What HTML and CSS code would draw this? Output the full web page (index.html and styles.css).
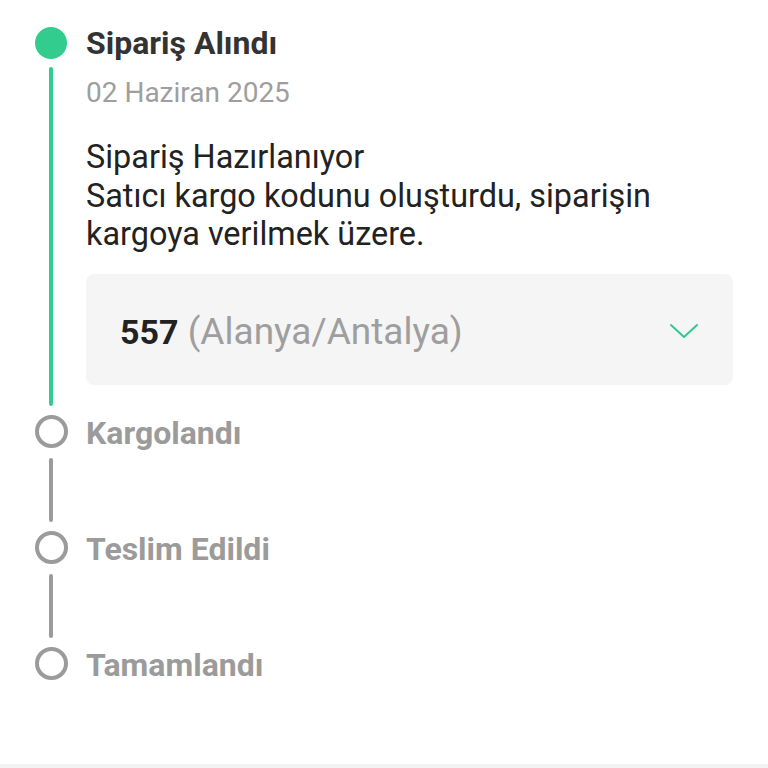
FILE: index.html
```html
<!DOCTYPE html>
<html lang="tr">
<head>
  <meta charset="UTF-8">
  <meta name="viewport" content="width=device-width, initial-scale=1.0">
  <title>Sipariş Takibi</title>
  <link rel="stylesheet" href="styles.css">
</head>
<body>

  <div class="timeline">

    <div class="step done">
      <div class="rail">
        <span class="dot"></span>
        <span class="line"></span>
      </div>
      <div class="step-body">
        <h2 class="step-title">Sipariş Alındı</h2>
        <div class="step-date">02 Haziran 2025</div>
        <p class="step-desc">Sipariş Hazırlanıyor<br>Satıcı kargo kodunu oluşturdu, siparişin kargoya verilmek üzere.</p>
        <div class="cargo-box">
          <span class="cargo-text"><b>557</b> (Alanya/Antalya)</span>
          <svg class="chevron" width="30" height="18" viewBox="0 0 30 18">
            <polyline points="2,3 15,15 28,3" fill="none" stroke="#32c98d" stroke-width="2" stroke-linecap="round" stroke-linejoin="round"/>
          </svg>
        </div>
      </div>
    </div>

    <div class="step">
      <div class="rail">
        <span class="dot"></span>
        <span class="line"></span>
      </div>
      <div class="step-body">
        <h2 class="step-title">Kargolandı</h2>
      </div>
    </div>

    <div class="step">
      <div class="rail">
        <span class="dot"></span>
        <span class="line"></span>
      </div>
      <div class="step-body">
        <h2 class="step-title">Teslim Edildi</h2>
      </div>
    </div>

    <div class="step last">
      <div class="rail">
        <span class="dot"></span>
      </div>
      <div class="step-body">
        <h2 class="step-title">Tamamlandı</h2>
      </div>
    </div>

  </div>

  <div class="bottom-bar"></div>

</body>
</html>
```

FILE: styles.css
```css
* {
  margin: 0;
  padding: 0;
  box-sizing: border-box;
}

html, body {
  height: 100%;
}

body {
  font-family: Roboto, 'Noto Sans', sans-serif;
  background-color: #fff;
  color: #222;
  display: flex;
  flex-direction: column;
}

.timeline {
  flex: 1;
  padding: 27px 35px 0 34px;
}

.step {
  display: flex;
}

.rail {
  width: 34px;
  display: flex;
  flex-direction: column;
  align-items: center;
  flex-shrink: 0;
}

.dot {
  width: 33px;
  height: 33px;
  border-radius: 50%;
  border: 4px solid #9b9b9b;
  background-color: #fff;
}

.line {
  flex: 1;
  width: 4px;
  border-radius: 2px;
  background-color: #9b9b9b;
  margin: 10px 0 9px;
}

.step-body {
  flex: 1;
  margin-left: 18px;
  padding-bottom: 81px;
}

.step.last .step-body {
  padding-bottom: 0;
}

.step-title {
  font-size: 32px;
  font-weight: 700;
  line-height: 33px;
  color: #9b9b9b;
  margin-top: 2px;
}

/* current step */
.step.done .dot {
  border: none;
  background-color: #32cd8e;
  width: 32px;
  height: 32px;
}

.step.done .line {
  background-color: #32cd8e;
  margin: 8px 0 9px;
}

.step.done .step-body {
  padding-bottom: 30px;
}

.step.done .step-title {
  color: #333;
  margin-top: 0;
}

.step-date {
  font-size: 28px;
  line-height: 32px;
  color: #9e9e9e;
  margin-top: 17px;
}

.step-desc {
  font-size: 32.4px;
  line-height: 38.5px;
  color: #222;
  margin-top: 29px;
}

.cargo-box {
  margin-top: 20px;
  height: 111px;
  background-color: #f5f5f5;
  border-radius: 8px;
  display: flex;
  align-items: center;
  justify-content: space-between;
  padding: 4px 34px 0 34px;
}

.cargo-text {
  font-size: 37px;
  color: #9e9e9e;
}

.cargo-text b {
  font-size: 34px;
  color: #222;
  font-weight: 700;
}

.bottom-bar {
  height: 4px;
  background-color: #f3f3f3;
}
```
